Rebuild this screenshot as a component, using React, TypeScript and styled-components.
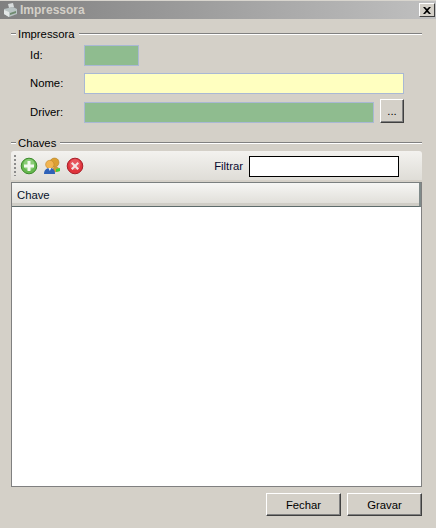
import React from "react";
import styled, { createGlobalStyle } from "styled-components";

const GlobalStyle = createGlobalStyle`
  html, body {
    margin: 0;
    padding: 0;
    background: #d4d0c8;
  }
  * {
    box-sizing: border-box;
  }
`;

const Win = styled.div`
  width: 436px;
  height: 528px;
  background: #d4d0c8;
  font-family: "Liberation Sans", Arial, sans-serif;
  font-size: 11.3px;
  color: #000;
  overflow: hidden;
  border-top: 1px solid #d8d5ce;
`;

const TitleBar = styled.div`
  height: 18px;
  display: flex;
  align-items: center;
  padding: 0 1px 0 3px;
  background: linear-gradient(to right, #808080, #c0c0c0);
`;

const TitleText = styled.span`
  margin-left: 2px;
  font-size: 12px;
  font-weight: 700;
  color: #d4d0c8;
  flex: 1;
`;

const CloseBox = styled.div`
  width: 16px;
  height: 14px;
  background: #d4d0c8;
  border: 1px solid;
  border-color: #fff #404040 #404040 #fff;
  display: flex;
  align-items: center;
  justify-content: center;
`;

const Body = styled.div`
  padding: 8px 14px 0 11px;
`;

const Legend = styled.div<{ $top?: number }>`
  display: flex;
  align-items: center;
  height: 14px;
  gap: 2px;
  margin-top: ${(p) => p.$top ?? 0}px;
  color: #000;
`;

const LegendTick = styled.div`
  width: 5px;
  height: 2px;
  border-top: 1px solid #808080;
  border-bottom: 1px solid #fff;
`;

const LegendLine = styled(LegendTick)`
  flex: 1;
  margin-left: 2px;
`;

const Row = styled.div<{ $top: number }>`
  display: flex;
  align-items: center;
  margin-top: ${(p) => p.$top}px;
  padding-left: 19px;
`;

const Label = styled.span`
  width: 54px;
  padding-bottom: 2px;
  color: #000;
`;

const Field = styled.div<{ $w: number; $bg: string }>`
  width: ${(p) => p.$w}px;
  height: 21px;
  background: ${(p) => p.$bg};
  border: 1px solid #a9b8d4;
`;

const DotsButton = styled.div`
  width: 24px;
  height: 24px;
  margin-left: 6px;
  margin-top: -3px;
  background: #d4d0c8;
  border: 1px solid;
  border-color: #fff #404040 #404040 #fff;
  box-shadow: inset -1px -1px 0 #808080;
  display: flex;
  align-items: center;
  justify-content: center;
  color: #000;
`;

const Toolbar = styled.div`
  height: 29px;
  display: flex;
  align-items: center;
  padding-left: 3px;
  background: linear-gradient(to bottom, #f3f2ef, #dfddd7);
  border-radius: 3px 3px 0 0;
  margin-top: 1px;
`;

const Grip = styled.div`
  width: 2px;
  height: 21px;
  background-image: linear-gradient(to bottom, #8c8c8c 2px, transparent 2px);
  background-size: 2px 4px;
`;

const ToolIcon = styled.svg`
  width: 18px;
  height: 18px;
  display: block;
`;

const Icons = styled.div`
  display: flex;
  align-items: center;
  gap: 5px;
  margin-left: 4px;
`;

const FilterLabel = styled.span`
  margin-left: auto;
  margin-right: 6px;
  color: #0a0a30;
`;

const FilterBox = styled.div`
  width: 150px;
  height: 21px;
  background: #fff;
  border: 1px solid #000;
  margin-right: 23px;
  margin-top: 1px;
`;

const Grid = styled.div`
  margin-top: 2px;
  height: 305px;
  background: #fff;
  border: 1px solid #808080;
  border-top-color: #7a7f7f;
`;

const GridHeader = styled.div`
  height: 24px;
  display: flex;
  align-items: center;
  padding-left: 5px;
  background: linear-gradient(to bottom, #f6f6f4, #dedcd6);
  border-bottom: 1px solid #5d6b6b;
  border-right: 2px solid #7f8a8a;
  box-shadow: inset 0 -3px 0 #cfcdc6;
  color: #06122a;
`;

const Footer = styled.div`
  display: flex;
  justify-content: flex-end;
  gap: 6px;
  margin-top: 6px;
`;

const WinButton = styled.div`
  width: 75px;
  height: 23px;
  background: #d4d0c8;
  border: 1px solid;
  border-color: #fff #404040 #404040 #fff;
  box-shadow: inset -1px -1px 0 #808080;
  display: flex;
  align-items: center;
  justify-content: center;
`;

const PrinterIcon = () => (
  <svg width="15" height="15" viewBox="0 0 15 15">
    <path d="M5 1l5-1 1 4-5 1z" fill="#d8dcdc" />
    <path d="M1 6l9-2 4 2v5l-8 3-5-3z" fill="#b9c3c3" />
    <path d="M1 7l5 2v5l-5-3z" fill="#e4e8e8" />
    <path d="M7 10l6-2v2l-6 2z" fill="#6f8a6f" />
  </svg>
);

const AddIcon = () => (
  <ToolIcon viewBox="0 0 18 18">
    <circle cx="9" cy="9" r="7.800" fill="#66b84f" stroke="#3c8a2c" />
    <circle cx="9" cy="7.500" r="5.500" fill="#a6dc96" opacity="0.55" />
    <path d="M7.500 4h3v3.500H14v3h-3.500V14h-3v-3.500H4v-3h3.500z" fill="#f2f8ee" />
  </ToolIcon>
);

const UsersIcon = () => (
  <ToolIcon viewBox="0 0 18 18">
    <circle cx="11.500" cy="5.500" r="4.500" fill="#dca033" stroke="#a87820" strokeWidth="0.500" />
    <path d="M9 16c0-4 1-6.500 3.500-6.500s4 1.500 4.500 4.500z" fill="#cf9a3a" />
    <circle cx="6.800" cy="7.500" r="4.200" fill="#f2b552" stroke="#b87a20" strokeWidth="0.500" />
    <path d="M1 17c0-3.500 2-6 5.800-6s5.200 2.500 5.200 6z" fill="#2f62b8" />
    <path d="M5.300 11l1.500 3 1.500-3z" fill="#eef2f8" />
    <path d="M13 12l4-1v3l-4 1z" fill="#3ccf3c" />
  </ToolIcon>
);

const RemoveIcon = () => (
  <ToolIcon viewBox="0 0 18 18">
    <circle cx="9" cy="9" r="7.800" fill="#e0343c" stroke="#a8202a" />
    <circle cx="9" cy="7.500" r="5.500" fill="#f08088" opacity="0.45" />
    <path d="M5 6.500L6.500 5 9 7.500 11.500 5 13 6.500 10.500 9 13 11.500 11.500 13 9 10.500 6.500 13 5 11.500 7.500 9z" fill="#f4e4e4" />
  </ToolIcon>
);

const App: React.FunctionComponent = () => {
  return (
    <Win>
      <GlobalStyle />
      <TitleBar>
        <PrinterIcon />
        <TitleText>Impressora</TitleText>
        <CloseBox>
          <svg width="8" height="7" viewBox="0 0 8 7">
            <path d="M0 0h2l2 2 2-2h2L5 3.500 8 7H6L4 5 2 7H0l3-3.500z" fill="#000" />
          </svg>
        </CloseBox>
      </TitleBar>
      <Body>
        <Legend>
          <LegendTick />
          <span>Impressora</span>
          <LegendLine />
        </Legend>
        <Row $top={4}>
          <Label>Id:</Label>
          <Field $w={55} $bg="#8fbc8f" />
        </Row>
        <Row $top={7}>
          <Label>Nome:</Label>
          <Field $w={320} $bg="#ffffc0" />
        </Row>
        <Row $top={8}>
          <Label>Driver:</Label>
          <Field $w={290} $bg="#8fbc8f" />
          <DotsButton>...</DotsButton>
        </Row>
        <Legend $top={13}>
          <LegendTick />
          <span>Chaves</span>
          <LegendLine />
        </Legend>
        <Toolbar>
          <Grip />
          <Icons>
            <AddIcon />
            <UsersIcon />
            <RemoveIcon />
          </Icons>
          <FilterLabel>Filtrar</FilterLabel>
          <FilterBox />
        </Toolbar>
        <Grid>
          <GridHeader>Chave</GridHeader>
        </Grid>
        <Footer>
          <WinButton>Fechar</WinButton>
          <WinButton>Gravar</WinButton>
        </Footer>
      </Body>
    </Win>
  );
};

export default App;
